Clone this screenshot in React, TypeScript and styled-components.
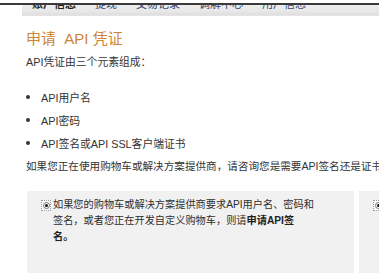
import styled, { createGlobalStyle } from "styled-components";

const GlobalStyle = createGlobalStyle`
  html, body {
    margin: 0;
    padding: 0;
    background: #fff;
    overflow: hidden;
  }
  body {
    font-family: "Liberation Sans", "Noto Sans CJK SC", sans-serif;
    color: #333;
  }
`;

const Page = styled.div`
  width: 379px;
  height: 276px;
  overflow: hidden;
`;

const Header = styled.div`
  margin-top: 3px;
  border-top: 2px solid #3a3a3a;
  height: 11px;
  overflow: hidden;
`;

const NavBar = styled.div`
  margin-left: 22px;
  height: 10px;
  background: linear-gradient(180deg, #eeeeee 0%, #e8e8e8 60%, #dedede 100%);
  border-bottom: 1px solid #e4e4e4;
  display: flex;
  gap: 19px;
  padding-left: 10px;
`;

const NavItem = styled.span<{ $active?: boolean }>`
  font-size: 11px;
  line-height: 11px;
  margin-top: -6px;
  white-space: nowrap;
  color: ${({ $active }) => ($active ? "#1e1e1e" : "#34466a")};
  font-weight: ${({ $active }) => ($active ? "bold" : "normal")};
`;

const Content = styled.div`
  padding-left: 26px;
`;

const Title = styled.h1`
  margin: 13px 0 0;
  font-size: 15px;
  line-height: 20px;
  font-weight: normal;
  color: #cd8436;
  white-space: pre;
`;

const Text = styled.p`
  margin: 6px 0 0;
  font-size: 10.8px;
  line-height: 14px;
  white-space: nowrap;
`;

const List = styled.ul`
  list-style: none;
  margin: 16.5px 0 0;
  padding: 0;
`;

const Item = styled.li`
  display: flex;
  align-items: center;
  height: 23px;
  font-size: 10.8px;

  &::before {
    content: "";
    width: 4px;
    height: 4px;
    border-radius: 50%;
    background: #333;
    margin: 0 11px 0 0;
  }
`;

const Note = styled(Text)`
  margin-top: 4.5px;
  font-size: 10.6px;
`;

const Options = styled.div`
  display: flex;
  gap: 5px;
  margin: 18px 0 0 1px;
`;

const OptionBox = styled.div`
  flex: 0 0 327px;
  height: 82px;
  background: #f1f1f1;
  padding: 6px 0 0 14px;
  box-sizing: border-box;
  display: flex;
  align-items: flex-start;
`;

const RadioFrame = styled.span`
  flex: 0 0 auto;
  width: 8px;
  height: 9px;
  margin-top: 3px;
  border: 1px dotted #9a9a9a;
  display: flex;
  align-items: center;
  justify-content: center;
  background: #fafafa;
`;

const RadioDot = styled.span`
  width: 7px;
  height: 7px;
  border-radius: 50%;
  border: 1px solid #777;
  box-sizing: border-box;
  display: flex;
  align-items: center;
  justify-content: center;

  &::after {
    content: "";
    width: 3px;
    height: 3px;
    border-radius: 50%;
    background: #111;
  }
`;

const OptionText = styled.div`
  margin-left: 2px;
  font-size: 10.2px;
  line-height: 16px;
  white-space: nowrap;
  color: #2e2e2e;

  b {
    color: #1e1e1e;
  }
`;

const navItems = ["账户信息", "提现", "交易记录", "调解中心", "用户信息"];

export default function App() {
  return (
    <>
      <GlobalStyle />
      <Page>
        <Header>
          <NavBar>
            {navItems.map((label, i) => (
              <NavItem key={label} $active={i === 0}>
                {label}
              </NavItem>
            ))}
          </NavBar>
        </Header>
        <Content>
          <Title>{"申请  API 凭证"}</Title>
          <Text>API凭证由三个元素组成：</Text>
          <List>
            <Item>API用户名</Item>
            <Item>API密码</Item>
            <Item>API签名或API SSL客户端证书</Item>
          </List>
          <Note>如果您正在使用购物车或解决方案提供商，请咨询您是需要API签名还是证书。</Note>
          <Options>
            <OptionBox>
              <RadioFrame>
                <RadioDot />
              </RadioFrame>
              <OptionText>
                如果您的购物车或解决方案提供商要求API用户名、密码和
                <br />
                签名，或者您正在开发自定义购物车，则请<b>申请API签</b>
                <br />
                <b>名。</b>
              </OptionText>
            </OptionBox>
            <OptionBox>
              <RadioFrame>
                <RadioDot />
              </RadioFrame>
              <OptionText>如果您的购物车或解决方案提供商要求API证书</OptionText>
            </OptionBox>
          </Options>
        </Content>
      </Page>
    </>
  );
}
